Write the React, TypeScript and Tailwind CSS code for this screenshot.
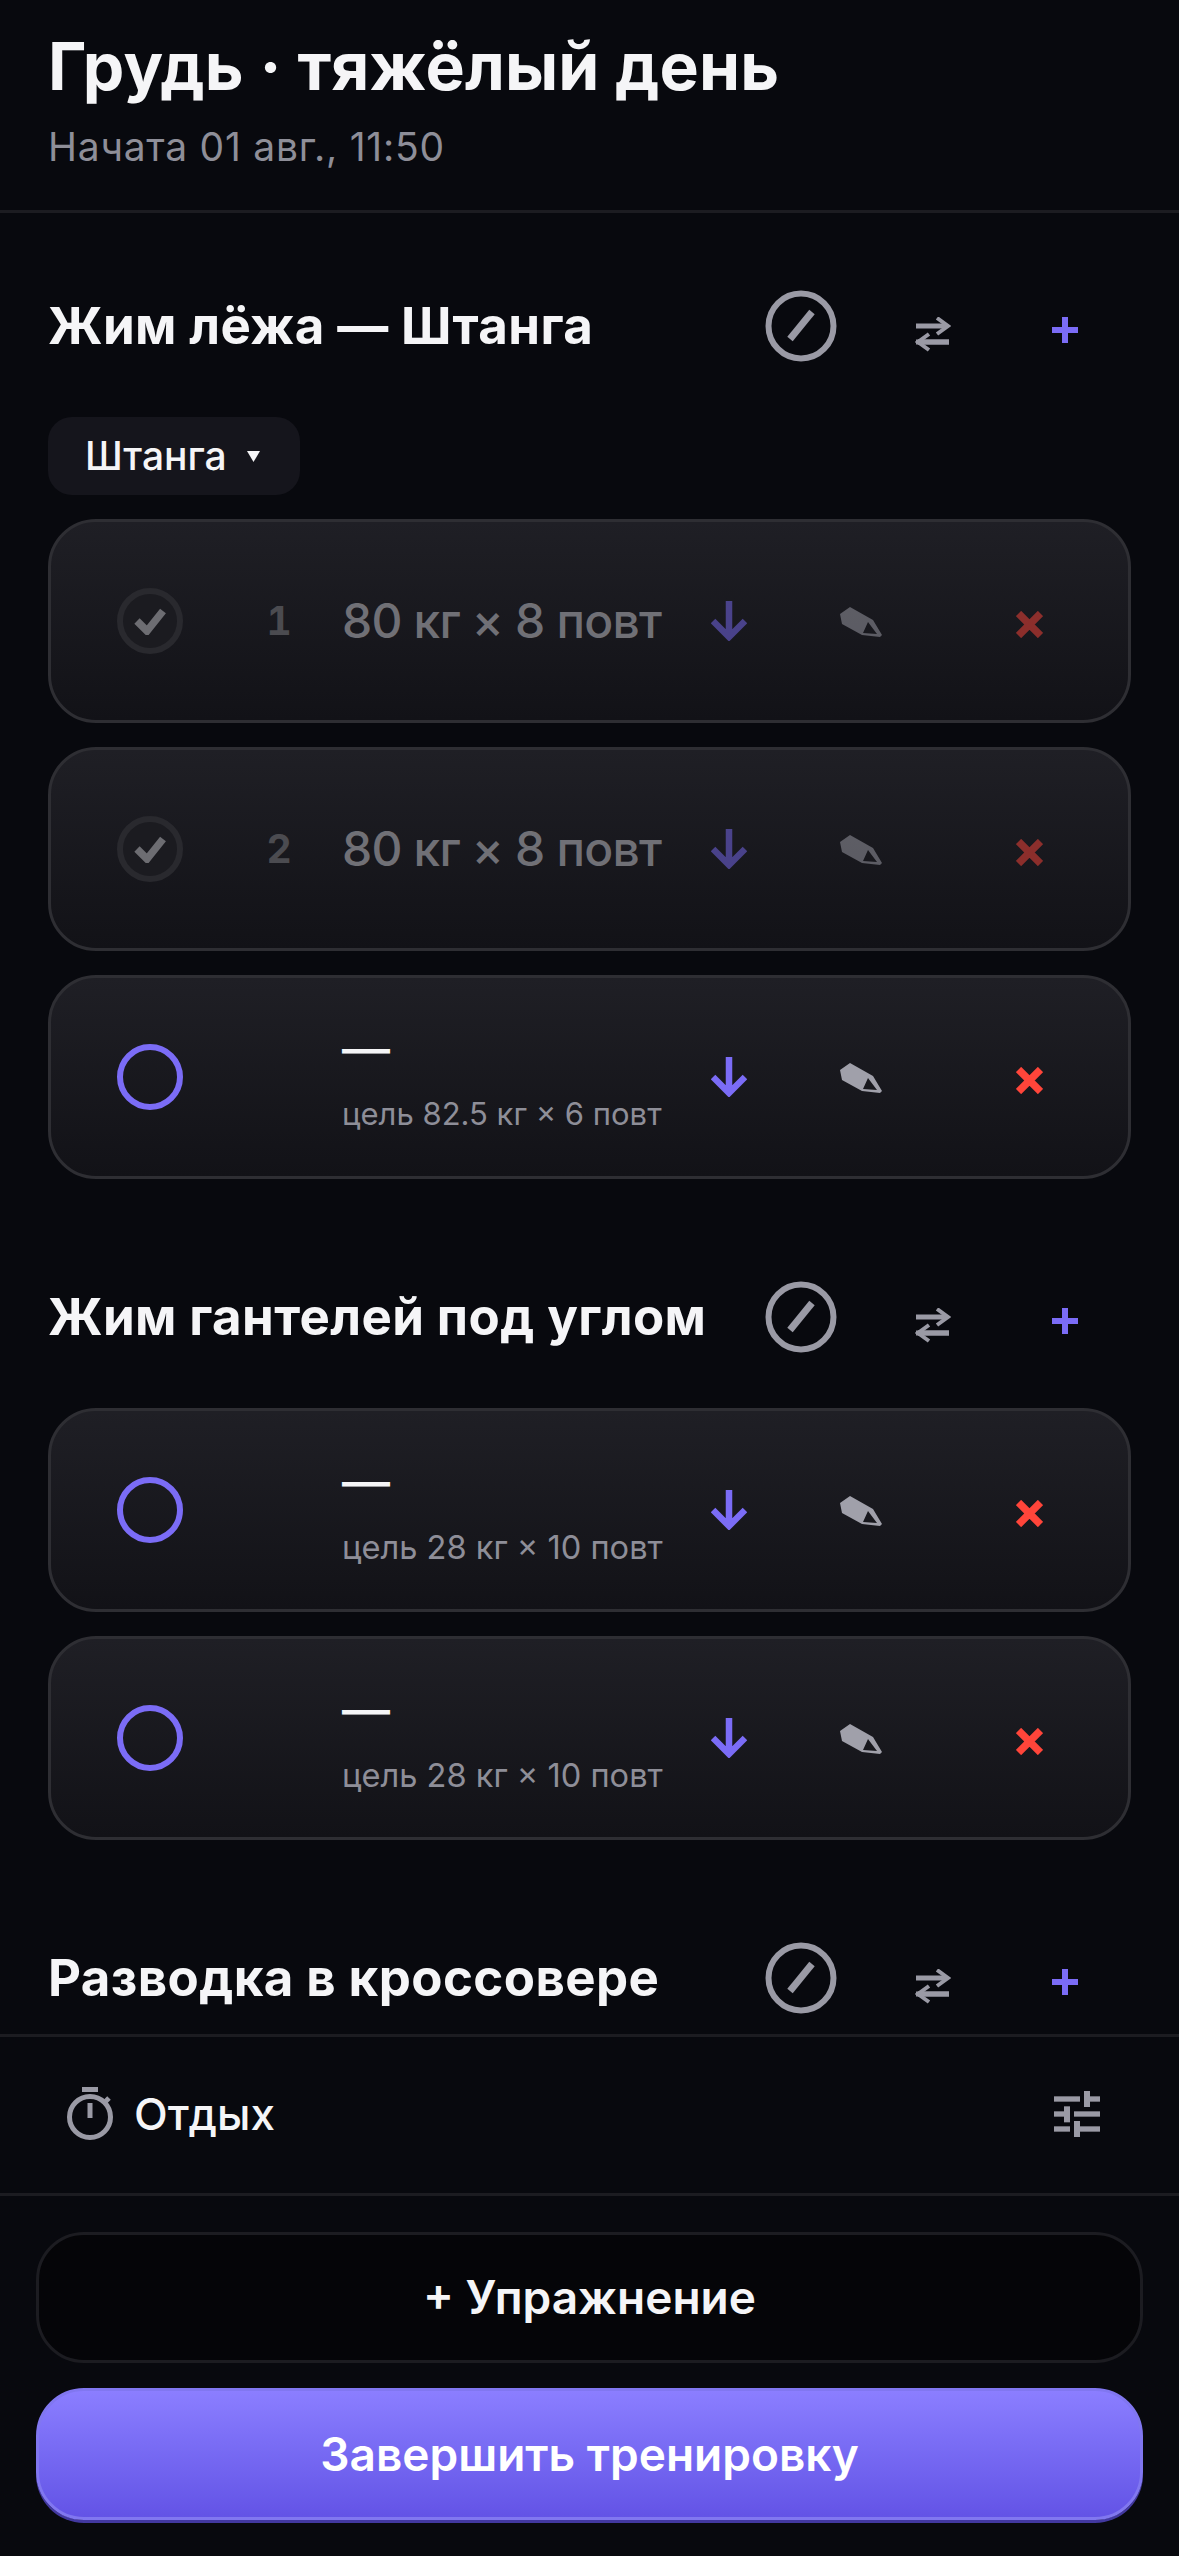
import React from 'react'

const ClearIcon = () => (
  <svg width="72" height="72" viewBox="0 0 72 72" fill="none" className="text-[#9a9aa5]">
    <circle cx="36" cy="36" r="32.5" stroke="currentColor" strokeWidth="6" />
    <path d="M47 22 25 49" stroke="currentColor" strokeWidth="7" />
  </svg>
)

const SwapIcon = () => (
  <svg width="36" height="36" viewBox="0 0 36 36" fill="none" className="mt-[18px] text-[#9a9aa5]">
    <path d="M1 9h31M1 25h33" stroke="currentColor" strokeWidth="5" />
    <path d="M22 1 33 9 22 17M14 17 3 25l11 8" stroke="currentColor" strokeWidth="4" />
    <path d="M34 25H3" stroke="currentColor" strokeWidth="5" />
  </svg>
)

const PlusIcon = () => (
  <svg width="26" height="26" viewBox="0 0 26 26" className="mt-[8px] text-[#7b6cf6]">
    <path d="M10 0h6v10h10v6H16v10h-6V16H0v-6h10z" fill="currentColor" />
  </svg>
)

const ArrowDown = () => (
  <svg width="36" height="40" viewBox="0 0 36 40" fill="none" className="text-[#7b6cf6]">
    <path d="M18 0v36M2 20l16 16 16-16" stroke="currentColor" strokeWidth="6.5" />
  </svg>
)

const Pencil = () => (
  <svg width="42" height="31" viewBox="0 0 42 31" className="mt-[2px] text-[#a0a0aa]">
    <path
      fillRule="evenodd"
      d="M0 7 10 0 33 13 42 28 40 30 22 28 2 17zM28 15 23 26 37 27z"
      fill="currentColor"
    />
  </svg>
)

const Cross = () => (
  <svg width="27" height="27" viewBox="0 0 27 27" fill="none" className="mt-[6px] text-[#ff453a]">
    <path d="M2.5 2.5l22 22M24.5 2.5l-22 22" stroke="currentColor" strokeWidth="7.5" />
  </svg>
)

const Stopwatch = () => (
  <svg width="46" height="53" viewBox="0 0 46 53" fill="none" className="text-[#9a9aa5]">
    <circle cx="23" cy="30" r="20.5" stroke="currentColor" strokeWidth="5" />
    <path d="M15 2.5h16M23 16v15M38 15l4-4" stroke="currentColor" strokeWidth="5" />
  </svg>
)

const Sliders = () => (
  <svg width="46" height="46" viewBox="0 0 138 138" className="text-[#9a9aa5]">
    <g fill="currentColor">
      <rect x="0" y="16" width="78" height="16" />
      <rect x="90" y="0" width="18" height="48" />
      <rect x="108" y="16" width="30" height="16" />
      <rect x="0" y="61" width="30" height="16" />
      <rect x="30" y="46" width="18" height="48" />
      <rect x="60" y="61" width="78" height="16" />
      <rect x="0" y="106" width="48" height="16" />
      <rect x="60" y="90" width="18" height="48" />
      <rect x="78" y="106" width="60" height="16" />
    </g>
  </svg>
)

type SetRow = {
  done: boolean
  num?: number
  value?: string
  goal?: string
  goalSize?: string
}

const SetCard = ({ row }: { row: SetRow }) => (
  <div className="flex h-[204px] items-center gap-[36px] rounded-[48px] border-[3px] border-[#2e2e33] bg-linear-to-b from-[#1f1f25] to-[#121217] px-[33px]">
    <div className="flex w-[132px] shrink-0 justify-center">
      {row.done ? (
        <span className="flex h-[66px] w-[66px] items-center justify-center rounded-full border-[6px] border-[#29292e] bg-[#1b1b20]">
          <svg width="32" height="28" viewBox="0 0 32 28" fill="none">
            <path d="M3 14l10 10L29 4" stroke="#6d6d72" strokeWidth="7.5" />
          </svg>
        </span>
      ) : (
        <span className="h-[66px] w-[66px] rounded-full border-[6px] border-[#7b6cf6]" />
      )}
    </div>
    <span className="w-[54px] shrink-0 text-center text-[39px] font-bold tabular-nums text-[#4b4b50]">
      {row.num}
    </span>
    <div className="flex min-w-0 flex-1 flex-col">
      {row.done ? (
        <span className="text-[48px] font-medium tracking-[-0.8px] whitespace-nowrap text-[#707076]">{row.value}</span>
      ) : (
        <>
          <span className="text-[48px] leading-[58px] font-medium text-[#f5f5f7]">—</span>
          <span className={`mt-[16px] leading-[40px] whitespace-nowrap text-[#8e8e98] ${row.goalSize}`}>{row.goal}</span>
        </>
      )}
    </div>
    <div className={`flex shrink-0 items-center gap-[36px] ${row.done ? 'opacity-50' : ''}`}>
      <div className="flex items-center">
        <button className="flex h-[132px] w-[132px] items-center justify-center">
          <ArrowDown />
        </button>
        <button className="flex h-[132px] w-[132px] items-center justify-center">
          <Pencil />
        </button>
      </div>
      <button className="flex h-[132px] w-[132px] items-center justify-center">
        <Cross />
      </button>
    </div>
  </div>
)

const ExerciseHeader = ({ title }: { title: string }) => (
  <div className="flex h-[132px] items-center">
    <h2 className="flex-1 text-[51px] font-bold tracking-[0.4px] whitespace-nowrap text-[#f5f5f7]">{title}</h2>
    <button className="flex h-[132px] w-[132px] items-center justify-center">
      <ClearIcon />
    </button>
    <button className="flex h-[132px] w-[132px] items-center justify-center">
      <SwapIcon />
    </button>
    <button className="flex h-[132px] w-[132px] items-center justify-center">
      <PlusIcon />
    </button>
  </div>
)

const benchSets: SetRow[] = [
  { done: true, num: 1, value: '80 кг × 8 повт' },
  { done: true, num: 2, value: '80 кг × 8 повт' },
  { done: false, goal: 'цель 82.5 кг × 6 повт', goalSize: 'text-[31px]' },
]

const dumbbellSets: SetRow[] = [
  { done: false, goal: 'цель 28 кг × 10 повт', goalSize: 'text-[32.6px]' },
  { done: false, goal: 'цель 28 кг × 10 повт', goalSize: 'text-[32.6px]' },
]

export default function App() {
  return (
    <div className="flex h-[2556px] w-[1179px] flex-col overflow-hidden bg-[#08090e] font-['Inter',sans-serif]">
      <header className="h-[213px] shrink-0 border-b-[3px] border-[#1c1c21] px-[48px] pt-[26px]">
        <h1 className="text-[66px] leading-[80px] font-bold tracking-[0.15px] text-[#f5f5f7]">Грудь · тяжёлый день</h1>
        <p className="mt-[17px] text-[39px] leading-[48px] tracking-[0.75px] text-[#8e8e98]">Начата 01 авг., 11:50</p>
      </header>

      <main className="flex-1 overflow-hidden px-[48px] pt-[47px]">
        <section>
          <ExerciseHeader title="Жим лёжа — Штанга" />
          <button className="mt-[25px] flex h-[78px] w-[252px] items-center gap-[20px] rounded-[24px] bg-[#15151c] pl-[37px]">
            <span className="text-[39px] font-medium text-[#f5f5f7]">Штанга</span>
            <svg width="13" height="11" viewBox="0 0 13 11">
              <path d="M0 0h13L6.5 11z" fill="#f5f5f7" />
            </svg>
          </button>
          <div className="mt-[24px] flex flex-col gap-[24px]">
            {benchSets.map((row, i) => (
              <SetCard key={i} row={row} />
            ))}
          </div>
        </section>

        <section className="mt-[72px]">
          <ExerciseHeader title="Жим гантелей под углом" />
          <div className="mt-[25px] flex flex-col gap-[24px]">
            {dumbbellSets.map((row, i) => (
              <SetCard key={i} row={row} />
            ))}
          </div>
        </section>

        <section className="mt-[72px]">
          <ExerciseHeader title="Разводка в кроссовере" />
        </section>
      </main>

      <div className="flex h-[162px] shrink-0 items-center justify-between border-y-[3px] border-[#1c1c21] pr-[36px] pb-[3px] pl-[67px]">
        <div className="flex items-center gap-[21px]">
          <Stopwatch />
          <span className="text-[44px] font-medium text-[#f5f5f7]">Отдых</span>
        </div>
        <button className="flex h-[132px] w-[132px] items-center justify-center">
          <Sliders />
        </button>
      </div>

      <footer className="flex shrink-0 flex-col gap-[25px] px-[36px] pt-[36px] pb-[36px]">
        <button className="h-[131px] rounded-[48px] border-[3px] border-[#1c1c21] bg-[#050508] text-[46px] font-semibold text-[#f5f5f7]">
          + Упражнение
        </button>
        <button className="h-[132px] rounded-[48px] border-[3px] border-[#8177f0] bg-linear-to-b from-[#8b7eff] to-[#6353e6] text-[46px] font-semibold text-white shadow-[0_3px_0_#4238a0]">
          Завершить тренировку
        </button>
      </footer>
    </div>
  )
}
